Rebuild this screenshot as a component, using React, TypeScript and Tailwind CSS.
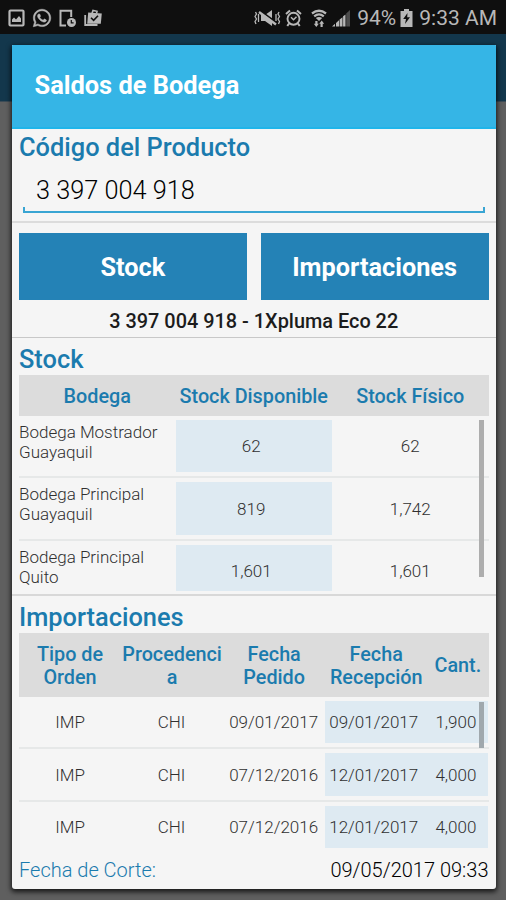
import { FaWhatsapp } from "react-icons/fa";

const stockRows = [
  { bodega: "Bodega Mostrador Guayaquil", disponible: "62", fisico: "62" },
  { bodega: "Bodega Principal Guayaquil", disponible: "819", fisico: "1,742" },
  { bodega: "Bodega Principal Quito", disponible: "1,601", fisico: "1,601" },
];

const importRows = [
  { tipo: "IMP", procedencia: "CHI", pedido: "09/01/2017", recepcion: "09/01/2017", cantidad: "1,900" },
  { tipo: "IMP", procedencia: "CHI", pedido: "07/12/2016", recepcion: "12/01/2017", cantidad: "4,000" },
  { tipo: "IMP", procedencia: "CHI", pedido: "07/12/2016", recepcion: "12/01/2017", cantidad: "4,000" },
];

const StatusBar = () => (
  <div className="flex h-[34px] items-center bg-[#0f0f0f] pl-2 pr-[9px] pt-[2px] text-[#b8b8b8]">
    {/* Notifications */}
    <div className="flex items-center">
      <svg width="17" height="18" viewBox="0 0 17 18" fill="none">
        <rect x="1.5" y="1.5" width="14" height="15" rx="1" stroke="currentColor" strokeWidth="2.2" />
        <path d="M4 13V10.5L6 8.5L8 10.5L11 7L13 9.5V13Z" fill="currentColor" />
      </svg>
      <FaWhatsapp size={20} className="ml-[7px]" stroke="currentColor" strokeWidth="14" />
      <svg width="19" height="19" viewBox="0 0 19 19" fill="none" className="ml-[6px]">
        <path d="M8 16.5H2.500V1.800H13.200V8" stroke="currentColor" strokeWidth="2" />
        <circle cx="13.500" cy="13.500" r="4.500" fill="currentColor" />
        <path d="M13.300 11v2.900h2.300" stroke="#0f0f0f" strokeWidth="1.200" />
      </svg>
      <svg width="18" height="18" viewBox="0 0 18 18" fill="none" className="ml-[7px]">
        <path d="M1.200 6v10H13.500" stroke="currentColor" strokeWidth="1.800" />
        <path d="M8 4.500L9 1.500L13 2.300L12.500 4.500" stroke="currentColor" strokeWidth="1.600" />
        <path d="M4.200 3.500L17.800 4.500L16.800 14.800H3.200Z" fill="currentColor" />
        <path d="M7 8.800L9.600 11.400L14 6.700" stroke="#0f0f0f" strokeWidth="1.600" />
      </svg>
    </div>
    {/* System state */}
    <div className="ml-auto flex items-center">
      <svg width="27" height="18" viewBox="0 0 27 18" fill="none" className="mr-[4px]">
        <path d="M7 6H11L18 1V17L11 12H7Z" fill="currentColor" />
        <path d="M6 1.500L23 14" stroke="#0f0f0f" strokeWidth="1.800" />
        <path d="M5 3L22 15.500" stroke="currentColor" strokeWidth="2.400" />
        <path d="M1.500 3L2.500 5L1 7.500L2.500 10L1 12.500L2 15M4.500 5V13M22 5V12M25 3L24 5L25.500 7.500L24 10L25.500 12.500L24.500 15" stroke="currentColor" strokeWidth="1.300" />
      </svg>
      <svg width="17" height="18" viewBox="0 0 17 18" fill="none">
        <circle cx="8.500" cy="9.800" r="6" stroke="currentColor" strokeWidth="1.900" />
        <path d="M1 5L5 1.500M16 5L12 1.500M4 14.500L2.300 17M13 14.500L14.700 17" stroke="currentColor" strokeWidth="2" />
        <path d="M6 8.300L8.500 10.800L11.500 7.800" stroke="currentColor" strokeWidth="1.500" />
      </svg>
      <svg width="16" height="19" viewBox="0 0 16 19" fill="none" className="ml-[9px]">
        <path d="M1 4.500Q8-1 15 4.500M3.200 7.300Q8 3.500 12.800 7.300" stroke="currentColor" strokeWidth="2.300" />
        <path d="M4.800 9Q8 6.800 11.200 9L8 12Z" fill="currentColor" />
        <path d="M5.300 18L2.800 14.800H4.300V12H6.500V14.800H7.800ZM10.700 11.500L13.200 14.700H11.700V18H9.500V14.700H8.200Z" fill="currentColor" />
      </svg>
      <svg width="18" height="18" viewBox="0 0 18 18" className="ml-[5px]">
        <path d="M0 17.500L3 14.800V17.500ZM4 14L7 11.300V17.500H4ZM7.600 10.500L10.500 8.200V17.500H7.600ZM11.100 7.300L13.500 5.500V17.500H11.100Z" fill="currentColor" />
        <path d="M14.200 4.500L18 1V17.500H14.200Z" fill="#4c4c4c" />
      </svg>
      <span className="ml-[7px] text-[21px] leading-none">94%</span>
      <svg width="13" height="18" viewBox="0 0 13 18" className="ml-[4px]">
        <path d="M4 0H9V2H12.500V18H0.500V2H4Z" fill="currentColor" />
        <path d="M7.500 4L3.200 10H6L5 15L10 8.300H7.200Z" fill="#0f0f0f" />
      </svg>
      <span className="ml-[6px] text-[21px] leading-none">9:33 AM</span>
    </div>
  </div>
);

const SectionTitle = ({ children }: { children: string }) => (
  <h2 className="text-[25.400px] font-medium leading-[28px] text-[#1b7bae]">{children}</h2>
);

const StockTable = () => (
  <div className="relative text-center">
    <div className="grid h-[41px] grid-cols-3 items-center bg-[#dcdcdc] pt-[2px] text-[19.8px] font-medium text-[#1b7bae]">
      <span>Bodega</span>
      <span>Stock Disponible</span>
      <span>Stock Físico</span>
    </div>
    <div className="h-[175px] overflow-hidden text-[17px] font-light text-[#303030]">
      {stockRows.map((row) => (
        <div key={row.bodega} className="grid h-[62.300px] grid-cols-3 border-b-2 border-[#e6e8e8] py-1">
          <span className="pr-2 pt-[2px] text-left leading-[20px]">{row.bodega}</span>
          <span className="flex items-center justify-center bg-[#deeaf2] pr-[5px] pt-[2px]">{row.disponible}</span>
          <span className="flex items-center justify-center pt-[2px]">{row.fisico}</span>
        </div>
      ))}
    </div>
    <div className="absolute right-[5px] top-[45px] h-[157px] w-[5px] bg-[#adadad]" />
  </div>
);

const ImportTable = () => (
  <div className="relative text-center">
    <div className="grid h-[64px] grid-cols-[5fr_5fr_5fr_5fr_3fr] items-center bg-[#dcdcdc] pt-[2px] text-[19.8px] font-medium leading-[23.500px] text-[#1b7bae]">
      <span>Tipo de<br />Orden</span>
      <span>Procedenci<br />a</span>
      <span>Fecha<br />Pedido</span>
      <span>Fecha<br />Recepción</span>
      <span>Cant.</span>
    </div>
    <div className="h-[156px] text-[17px] font-light text-[#303030]">
      {importRows.map((row, index) => (
        <div key={index} className="grid h-[52.300px] grid-cols-[5fr_5fr_5fr_5fr_3fr] border-b-2 border-[#e6e8e8] py-1 last:border-transparent">
          <span className="flex items-center justify-center pt-[2px]">{row.tipo}</span>
          <span className="flex items-center justify-center pr-px pt-[2px]">{row.procedencia}</span>
          <span className="flex items-center justify-center pr-px pt-[2px]">{row.pedido}</span>
          <span className="flex items-center justify-center bg-[#deeaf2] pr-[5px] pt-[2px]">{row.recepcion}</span>
          <span className="flex items-center justify-center bg-[#deeaf2] pr-1 pt-[2px]">{row.cantidad}</span>
        </div>
      ))}
    </div>
    <div className="absolute right-[5px] top-[69px] h-[46px] w-[5px] bg-[#a0a8ad]" />
  </div>
);

const App = () => {
  return (
    <div className="h-[900px] w-[506px] overflow-hidden bg-[#5f5f5f] font-['Roboto',sans-serif]">
      <StatusBar />
      <div className="h-[867px] bg-linear-to-b from-[#13374c] from-[67px] to-[#5f5f5f] to-[68px] pl-[11.5px] pr-[10px] pt-[11px]">
        <div className="h-[844px] overflow-hidden rounded-t-[1px] rounded-b-[3px] bg-[#f5f5f5] shadow-[0_2px_5px_1px_rgba(0,0,0,0.75)]">
          <header className="flex h-[84px] items-center border-b-2 border-[#20b5ea] bg-[#35b5e6] pl-[23px]">
            <h1 className="text-[25.400px] font-bold leading-none text-white">Saldos de Bodega</h1>
          </header>

          <section className="h-[94px] border-b-2 border-[#dcdcdc] px-[7.500px] pt-[4px]">
            <SectionTitle>Código del Producto</SectionTitle>
            <div className="ml-1 mr-1 mt-[15px] px-[13px] text-[25.300px] font-light leading-[30px] text-black">
              3 397 004 918
            </div>
            <div className="ml-1 mr-1 mt-px h-[6px] border-x-2 border-b-2 border-[#39a5d3]" />
          </section>

          <section className="h-[115px] border-b border-[#c8c8c8] px-[7.500px] pt-[10px]">
            <div className="grid grid-cols-2 gap-[14px]">
              <button className="h-[67px] bg-[#2482b6] pt-[3px] text-[25.300px] font-bold text-white">Stock</button>
              <button className="h-[67px] bg-[#2482b6] pt-[3px] text-[25.300px] font-bold text-white">Importaciones</button>
            </div>
            <p className="mt-[10px] text-center text-[19.900px] font-medium leading-[24px] text-[#1c1c1c]">
              3 397 004 918 - 1Xpluma Eco 22
            </p>
          </section>

          <section className="h-[258px] border-b-2 border-[#d8d8d8] px-[7.500px] pt-[7px]">
            <SectionTitle>Stock</SectionTitle>
            <div className="mt-[2px]">
              <StockTable />
            </div>
          </section>

          <section className="px-[7.500px] pt-[7px]">
            <SectionTitle>Importaciones</SectionTitle>
            <div className="mt-[2px]">
              <ImportTable />
            </div>
            <footer className="mt-[5px] flex justify-between text-[20px] font-light leading-[24px]">
              <span className="text-[#1b7bae]">Fecha de Corte:</span>
              <span className="text-black">09/05/2017 09:33</span>
            </footer>
          </section>
        </div>
      </div>
    </div>
  );
};

export default App;
